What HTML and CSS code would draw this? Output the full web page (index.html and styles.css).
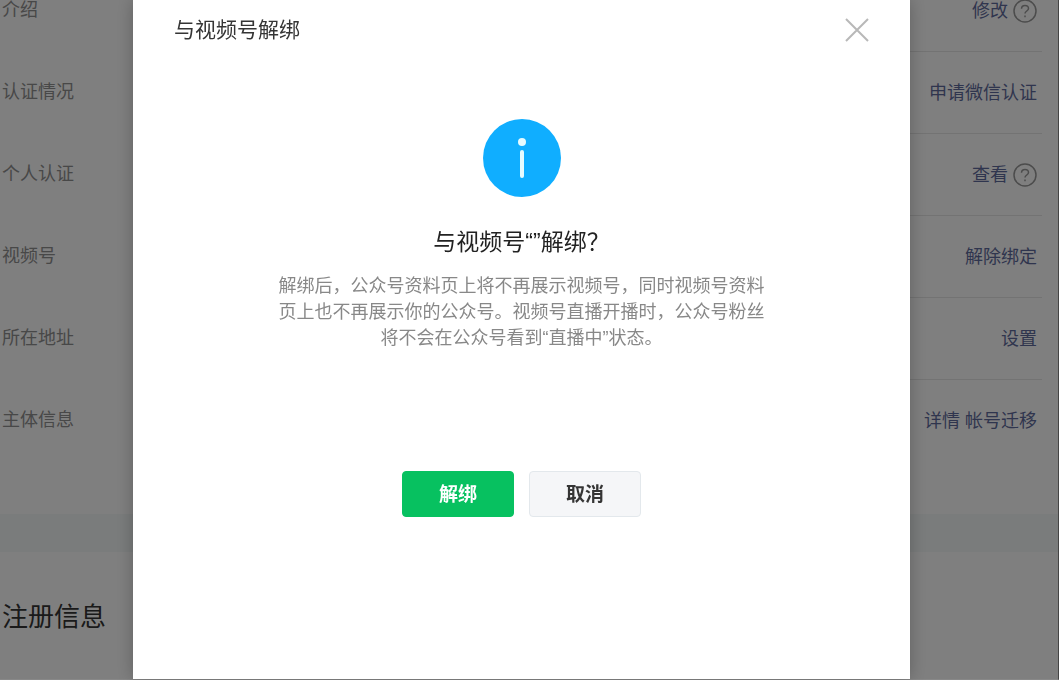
FILE: index.html
```html
<!DOCTYPE html>
<html lang="zh-CN">

<head>
    <meta charset="UTF-8">
    <meta name="viewport" content="width=device-width, initial-scale=1.0">
    <title>与视频号解绑</title>
    <link rel="stylesheet" href="styles.css">
</head>

<body>

    <!-- Account settings -->
    <main class="page">
        <section class="settings">
            <div class="row">
                <span class="label">介绍</span>
                <div class="actions">
                    <a href="#">修改</a>
                    <svg class="help" viewBox="0 0 24 24">
                        <circle cx="12" cy="12" r="11" />
                        <path d="M8.5 9.8c0-2 1.5-3.4 3.5-3.4s3.5 1.3 3.5 3.1c0 2.4-3.5 2.6-3.5 5.1" />
                        <path d="M12 16.4v1.8" />
                    </svg>
                </div>
            </div>
            <div class="row">
                <span class="label">认证情况</span>
                <div class="actions">
                    <a href="#">申请微信认证</a>
                </div>
            </div>
            <div class="row">
                <span class="label">个人认证</span>
                <div class="actions">
                    <a href="#">查看</a>
                    <svg class="help" viewBox="0 0 24 24">
                        <circle cx="12" cy="12" r="11" />
                        <path d="M8.5 9.8c0-2 1.5-3.4 3.5-3.4s3.5 1.3 3.5 3.1c0 2.4-3.5 2.6-3.5 5.1" />
                        <path d="M12 16.4v1.8" />
                    </svg>
                </div>
            </div>
            <div class="row">
                <span class="label">视频号</span>
                <div class="actions">
                    <a href="#">解除绑定</a>
                </div>
            </div>
            <div class="row">
                <span class="label">所在地址</span>
                <div class="actions">
                    <a href="#">设置</a>
                </div>
            </div>
            <div class="row">
                <span class="label">主体信息</span>
                <div class="actions">
                    <a href="#">详情</a>
                    <a href="#">帐号迁移</a>
                </div>
            </div>
        </section>
        <section class="register">
            <h2>注册信息</h2>
        </section>
    </main>

    <!-- Dialog -->
    <div class="mask">
        <div class="dialog" role="dialog" aria-labelledby="dialog-title">
            <div class="dialog-head">
                <h3 id="dialog-title">与视频号解绑</h3>
                <button class="close" type="button" aria-label="关闭">
                    <svg viewBox="0 0 24 24">
                        <path d="M1 1l22 22M23 1L1 23" />
                    </svg>
                </button>
            </div>
            <div class="dialog-body">
                <svg class="info" viewBox="0 0 78 78">
                    <circle class="info-bg" cx="39" cy="39" r="39" />
                    <circle class="info-mark" cx="39" cy="23" r="4" />
                    <rect class="info-mark" x="37" y="31" width="4" height="28" rx="2" />
                </svg>
                <h4>与视频号“”解绑？</h4>
                <p>解绑后，公众号资料页上将不再展示视频号，同时视频号资料页上也不再展示你的公众号。视频号直播开播时，公众号粉丝将不会在公众号看到“直播中”状态。</p>
            </div>
            <div class="buttons">
                <button class="btn primary" type="button">解绑</button>
                <button class="btn" type="button">取消</button>
            </div>
        </div>
    </div>

</body>

</html>
```

FILE: styles.css
```css
* {
    box-sizing: border-box;
}

body {
    margin: 0;
    height: 100vh;
    overflow: hidden;
    background: #fff;
    font-family: "Liberation Sans", "Noto Sans CJK SC", sans-serif;
    font-size: 18px;
    line-height: 24px;
}

h2,
h3,
h4,
p {
    margin: 0;
    font-weight: normal;
}

/* the page behind is scrolled a little */
.page {
    margin-top: -30px;
}

.settings {
    padding: 0 17px 52px 0;
    border-bottom: 38px solid #f4f9f8;
}

.row {
    display: flex;
    height: 82px;
    padding-left: 2px;
}

.label {
    width: 160px;
    padding-top: 28px;
    color: #909090;
}

/* the divider starts after the label column */
.actions {
    flex: 1;
    display: flex;
    justify-content: flex-end;
    align-items: center;
    gap: 5px;
    padding-right: 5px;
    border-bottom: 1px solid #e6e6e6;
}

.row:last-child .actions {
    border-bottom: none;
}

.actions a {
    color: #5f6b9c;
    text-decoration: none;
}

.help {
    width: 24px;
    height: 24px;
    fill: none;
    stroke: #999;
    stroke-width: 1.5;
}

.register {
    padding: 46px 2px;
}

.register h2 {
    font-size: 26px;
    line-height: 38px;
    color: #353535;
}

.mask {
    position: fixed;
    inset: 0;
    display: flex;
    justify-content: center;
    padding-right: 15px;
    background: rgba(0, 0, 0, 0.5);
    border-right: 1px solid #444;
    border-bottom: 1px solid #888;
}

.dialog {
    width: 100%;
    max-width: 777px;
    background: #fff;
    box-shadow: 0 0 16px rgba(0, 0, 0, 0.25);
}

.dialog-head {
    display: flex;
    justify-content: space-between;
    align-items: center;
    height: 60px;
    padding: 0 41px;
}

.dialog-head h3 {
    font-size: 21px;
    color: #353535;
}

.close {
    display: flex;
    padding: 0;
    border: none;
    background: none;
    cursor: pointer;
}

.close svg {
    width: 24px;
    height: 24px;
    stroke: #b8b8b8;
    stroke-width: 2;
}

.dialog-body {
    display: flex;
    flex-direction: column;
    align-items: center;
    padding-top: 59px;
    text-align: center;
}

.info {
    width: 78px;
    height: 78px;
}

.info-bg {
    fill: #10aeff;
}

.info-mark {
    fill: #e6fbff;
}

.dialog-body h4 {
    margin-top: 27px;
    font-size: 23px;
    line-height: 36px;
    color: #222;
}

.dialog-body p {
    max-width: 492px;
    margin-top: 13px;
    line-height: 26px;
    color: #888;
}

.buttons {
    display: flex;
    justify-content: center;
    gap: 15px;
    padding-top: 120px;
}

.btn {
    width: 112px;
    height: 46px;
    padding: 0 0 4px;
    border: 1px solid #e3e8ec;
    border-radius: 4px;
    background: #f5f6f8;
    color: #353535;
    font-family: inherit;
    font-size: 19px;
    font-weight: bold;
    cursor: pointer;
}

.btn.primary {
    border-color: #07c160;
    background: #07c160;
    color: #fff;
}
```
